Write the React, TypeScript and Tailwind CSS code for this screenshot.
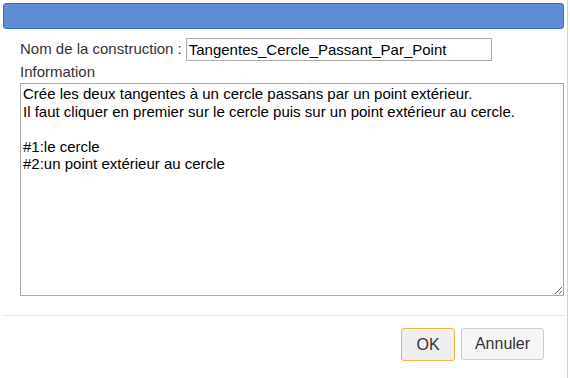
import React from 'react';

export default function App() {
  const info =
    "Crée les deux tangentes à un cercle passans par un point extérieur.\nIl faut cliquer en premier sur le cercle puis sur un point extérieur au cercle.\n\n#1:le cercle\n#2:un point extérieur au cercle";

  return (
    <div
      className="w-[570px] h-[378px] bg-white relative overflow-hidden"
      style={{ fontFamily: '"Liberation Sans", Arial, sans-serif' }}
    >
      <div className="w-[568px] h-[378px] border-r border-[#d4d4d4] flex flex-col">
        <div className="mx-[3px] mt-[3px] h-[26px] rounded-[3px] bg-[#5f8dd3] border border-[#3b6fc4]" />

        <div className="px-[20px] pt-[9px] flex flex-col">
          <div className="flex items-center h-[22px]">
            <span className="text-[15px] text-[#333] mr-[4px]">Nom de la construction :</span>
            <input
              className="w-[306px] h-[23px] border border-[#a9a9a9] px-[2px] text-[15px] text-black outline-none"
              defaultValue="Tangentes_Cercle_Passant_Par_Point"
            />
          </div>
          <div className="text-[15px] text-[#333] mt-[2px] leading-[19px]">Information</div>
          <textarea
            className="mt-[2px] w-[544px] h-[213px] border border-[#a9a9a9] px-[2px] pt-[1px] text-[15px] leading-[17.5px] text-black outline-none resize"
            defaultValue={info}
          />
        </div>

        <div className="mt-[19px] mx-[3px] border-t border-[#e5e5e5]" />

        <div className="flex justify-end gap-[6px] pr-[23px] pt-[12px]">
          <button className="w-[54px] h-[33px] rounded-[3px] border border-[#f0b54a] bg-[#efefef] text-[16px] text-[#333]">
            OK
          </button>
          <button className="w-[83px] h-[32px] rounded-[3px] border border-[#cccccc] bg-[#f6f6f6] text-[16px] text-[#333]">
            Annuler
          </button>
        </div>
      </div>
    </div>
  );
}
